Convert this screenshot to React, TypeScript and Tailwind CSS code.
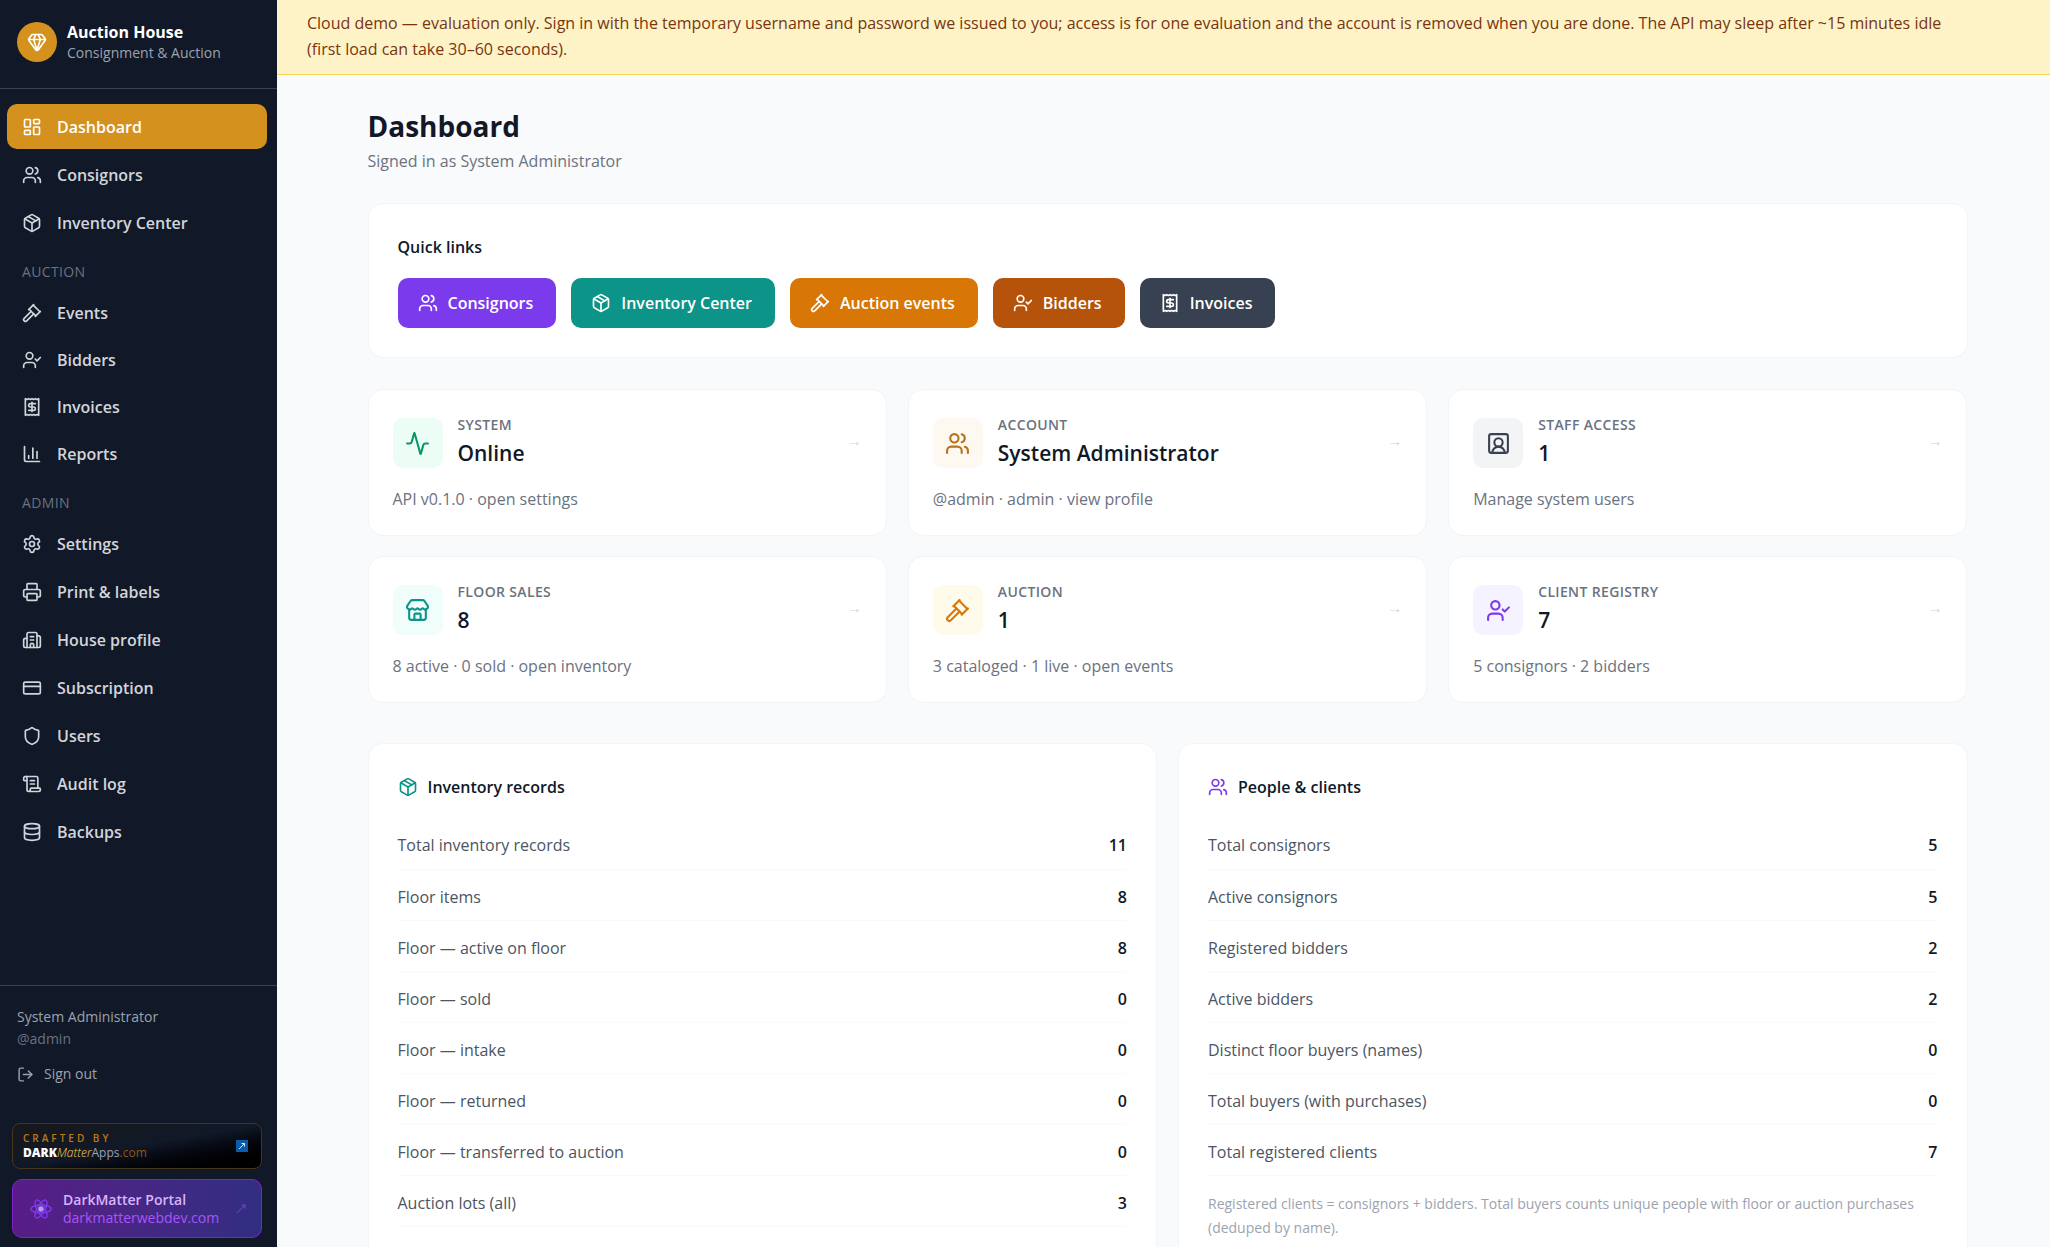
import type { ReactNode } from "react";
import {
  Activity,
  Building2,
  ChartColumn,
  CreditCard,
  Database,
  Gavel,
  Gem,
  LayoutDashboard,
  LogOut,
  Package,
  Printer,
  Receipt,
  ScrollText,
  Settings,
  Shield,
  SquareUserRound,
  Store,
  UserCheck,
  Users,
  type LucideIcon,
} from "lucide-react";

interface NavItem {
  label: string;
  icon: LucideIcon;
}

const mainNav: NavItem[] = [
  { label: "Dashboard", icon: LayoutDashboard },
  { label: "Consignors", icon: Users },
  { label: "Inventory Center", icon: Package },
];

const auctionNav: NavItem[] = [
  { label: "Events", icon: Gavel },
  { label: "Bidders", icon: UserCheck },
  { label: "Invoices", icon: Receipt },
  { label: "Reports", icon: ChartColumn },
];

const adminNav: NavItem[] = [
  { label: "Settings", icon: Settings },
  { label: "Print & labels", icon: Printer },
  { label: "House profile", icon: Building2 },
  { label: "Subscription", icon: CreditCard },
  { label: "Users", icon: Shield },
  { label: "Audit log", icon: ScrollText },
  { label: "Backups", icon: Database },
];

const quickLinks = [
  { label: "Consignors", icon: Users, color: "bg-[#7c3aed]" },
  { label: "Inventory Center", icon: Package, color: "bg-[#0d9488]" },
  { label: "Auction events", icon: Gavel, color: "bg-[#d97706]" },
  { label: "Bidders", icon: UserCheck, color: "bg-[#b45309]" },
  { label: "Invoices", icon: Receipt, color: "bg-[#374151]" },
];

const stats = [
  { label: "System", value: "Online", hint: "API v0.1.0 · open settings", icon: Activity, tone: "bg-[#ecfdf5] text-[#059669]" },
  { label: "Account", value: "System Administrator", hint: "@admin · admin · view profile", icon: Users, tone: "bg-[#fdf8f0] text-[#b8731a]" },
  { label: "Staff access", value: "1", hint: "Manage system users", icon: SquareUserRound, tone: "bg-[#f3f4f6] text-[#374151]" },
  { label: "Floor sales", value: "8", hint: "8 active · 0 sold · open inventory", icon: Store, tone: "bg-[#f0fdfa] text-[#0d9488]" },
  { label: "Auction", value: "1", hint: "3 cataloged · 1 live · open events", icon: Gavel, tone: "bg-[#fffbeb] text-[#d97706]" },
  { label: "Client registry", value: "7", hint: "5 consignors · 2 bidders", icon: UserCheck, tone: "bg-[#f5f3ff] text-[#7c3aed]" },
];

const inventoryRows: [string, number][] = [
  ["Total inventory records", 11],
  ["Floor items", 8],
  ["Floor — active on floor", 8],
  ["Floor — sold", 0],
  ["Floor — intake", 0],
  ["Floor — returned", 0],
  ["Floor — transferred to auction", 0],
  ["Auction lots (all)", 3],
  ["Auction — cataloged", 3],
];

const peopleRows: [string, number][] = [
  ["Total consignors", 5],
  ["Active consignors", 5],
  ["Registered bidders", 2],
  ["Active bidders", 2],
  ["Distinct floor buyers (names)", 0],
  ["Total buyers (with purchases)", 0],
  ["Total registered clients", 7],
];

export default function App() {
  return (
    <div className="flex h-screen overflow-hidden bg-[#f9fafb] font-['Open_Sans','Noto_Sans',sans-serif] text-[16px] leading-6 text-[#111827]">
      <Sidebar />
      <div className="flex min-w-0 flex-1 flex-col">
        <div className="shrink-0 border-b border-[#fcd34d] bg-[#fef3c7] pt-[10px] pr-20 pb-3 pl-[30px] leading-[26px] text-[#78350f]">
          Cloud demo — evaluation only. Sign in with the temporary username and password we issued to you; access is
          for one evaluation and the account is removed when you are done. The API may sleep after ~15 minutes idle
          (first load can take 30–60 seconds).
        </div>
        <main className="min-h-0 flex-1 overflow-y-auto pt-[30px] pr-[30px] pl-[38px] [scrollbar-width:none]">
          <div className="mx-auto max-w-[1600px]">
            <h1 className="text-[28px] leading-[42px] font-bold">Dashboard</h1>
            <p className="mt-[2px] text-[#6b7280]">Signed in as System Administrator</p>

            <section className="mt-[30px] rounded-[15px] border border-[#f3f4f6] bg-white p-[29px]">
              <h2 className="leading-7 font-semibold">Quick links</h2>
              <div className="mt-[17px] flex flex-wrap gap-[15px]">
                {quickLinks.map(({ label, icon: Icon, color }) => (
                  <a
                    key={label}
                    href="#"
                    className={`flex h-[50px] items-center gap-[10px] rounded-[10px] pr-[23px] pl-5 font-semibold text-white ${color}`}
                  >
                    <Icon size={20} />
                    {label}
                  </a>
                ))}
              </div>
            </section>

            <div className="mt-[31px] grid grid-cols-3 gap-x-[21px] gap-y-5">
              {stats.map((s) => (
                <a key={s.label} href="#" className="rounded-[15px] border border-[#f3f4f6] bg-white px-6 pt-[25px] pb-6">
                  <div className="flex items-center">
                    <span className={`flex size-[50px] items-center justify-center rounded-[10px] ${s.tone}`}>
                      <s.icon size={25} />
                    </span>
                    <div className="ml-[15px] flex-1">
                      <p className="text-[14px] leading-5 font-semibold tracking-wide text-[#6b7280] uppercase">{s.label}</p>
                      <p className="text-[21px] leading-9 font-semibold">{s.value}</p>
                    </div>
                    <span className="pb-1 font-['Liberation_Sans',sans-serif] text-[15px] text-[#d1d5db]">→</span>
                  </div>
                  <p className="mt-4 text-[#6b7280]">{s.hint}</p>
                </a>
              ))}
            </div>

            <div className="mt-10 grid grid-cols-2 items-start gap-[21px]">
              <RecordCard title="Inventory records" icon={<Package size={20} className="text-[#0d9488]" />} rows={inventoryRows} />
              <RecordCard title="People & clients" icon={<Users size={20} className="text-[#7c3aed]" />} rows={peopleRows}>
                <p className="mt-4 text-[14px] text-[#9ca3af]">
                  Registered clients = consignors + bidders. Total buyers counts unique people with floor or auction
                  purchases (deduped by name).
                </p>
              </RecordCard>
            </div>
          </div>
        </main>
      </div>
    </div>
  );
}

interface RecordCardProps {
  title: string;
  icon: ReactNode;
  rows: [string, number][];
  children?: ReactNode;
}

function RecordCard({ title, icon, rows, children }: RecordCardProps) {
  return (
    <section className="rounded-[15px] border border-[#f3f4f6] bg-white p-[29px]">
      <h2 className="mb-[17px] flex items-center gap-[10px] leading-7 font-semibold">
        {icon}
        {title}
      </h2>
      <table className="w-full">
        <tbody>
          {rows.map(([label, value]) => (
            <tr key={label} className="h-[51px] border-b border-[#f9fafb]">
              <th scope="row" className="pt-1 text-left font-normal text-[#4b5563]">
                {label}
              </th>
              <td className="pt-1 text-right font-semibold">{value}</td>
            </tr>
          ))}
        </tbody>
      </table>
      {children}
    </section>
  );
}

function Sidebar() {
  return (
    <aside className="flex w-[277px] shrink-0 flex-col bg-[#111827]">
      <div className="flex h-[89px] shrink-0 items-center gap-[10px] border-b border-[#374151] pb-1 pl-[17px]">
        <span className="flex size-10 items-center justify-center rounded-full bg-[#d4911e] text-white">
          <Gem size={20} />
        </span>
        <div>
          <p className="leading-[22px] font-bold text-white">Auction House</p>
          <p className="text-[14px] leading-5 text-[#9ca3af]">Consignment &amp; Auction</p>
        </div>
      </div>

      <nav className="min-h-0 flex-1 overflow-hidden pt-[15px] pr-[10px] pl-[7px]">
        <NavGroup items={mainNav} active="Dashboard" />
        <NavGroup title="Auction" items={auctionNav} tight />
        <NavGroup title="Admin" items={adminNav} />
      </nav>

      <div className="border-t border-[#374151] px-[17px] pt-5 text-[14px] leading-[22px] text-[#9ca3af]">
        <p>System Administrator</p>
        <p className="text-[#6b7280]">@admin</p>
        <button type="button" className="mt-[13px] flex items-center gap-[10px]">
          <LogOut size={17} />
          Sign out
        </button>
      </div>

      <div className="flex flex-col gap-[10px] pt-[38px] pr-[15px] pb-[9px] pl-3">
        <a
          href="#"
          className="flex h-[46px] items-center justify-between rounded-lg border border-[#44351b] bg-linear-to-br from-[#18181b] via-[#111827] to-black pr-[13px] pl-[10px]"
        >
          <span>
            <span className="block text-[10px] leading-[13px] font-semibold tracking-[3px] text-[#b8791a] uppercase">
              Crafted by
            </span>
            <span className="block text-[12px] leading-4 text-[#9ca3af]">
              <b className="font-extrabold text-white">DARK</b>
              <i className="font-light text-[#fcd34d]">Matter</i>
              <span className="font-medium">Apps</span>
              <span className="text-[#92560f]">.com</span>
            </span>
          </span>
          <svg viewBox="0 0 12 12" className="size-3 bg-[#0a5ca8]" fill="none" stroke="#dbeafe">
            <path d="M3 9 8.5 3.5M5.500 3.500h3v3" />
          </svg>
        </a>
        <a
          href="#"
          className="flex h-[59px] items-center rounded-[10px] border border-[#7e22ce] bg-linear-to-r from-[#581c87] to-[#312e81] pr-[15px] pl-[17px] text-[14px] leading-[18px]"
        >
          <svg viewBox="-12 -12 24 24" className="size-[22px]" fill="none" stroke="#7c3aed" strokeWidth="1.5">
            <ellipse rx="11" ry="4.300" />
            <ellipse rx="11" ry="4.300" transform="rotate(60)" />
            <ellipse rx="11" ry="4.300" transform="rotate(120)" />
            <circle r="3" fill="#b79af5" stroke="none" />
          </svg>
          <span className="ml-[11px] flex-1">
            <span className="block font-semibold text-[#d8b4fe]">DarkMatter Portal</span>
            <span className="block text-[#a855f7]">darkmatterwebdev.com</span>
          </span>
          <svg viewBox="0 0 10 10" className="size-[10px]" fill="none" stroke="#9333ea">
            <path d="M1 9 9 1M5.500 1H9v3.500" />
          </svg>
        </a>
      </div>
    </aside>
  );
}

interface NavGroupProps {
  title?: string;
  items: NavItem[];
  active?: string;
  tight?: boolean;
}

function NavGroup({ title, items, active, tight }: NavGroupProps) {
  return (
    <>
      {title && (
        <p className="pt-[17px] pb-2 pl-[15px] text-[14px] leading-5 tracking-wide text-[#6b7280] uppercase">{title}</p>
      )}
      <ul className={`flex flex-col font-semibold text-[#d1d5db] ${tight ? "gap-[2px]" : "gap-[3px]"}`}>
        {items.map(({ label, icon: Icon }) => (
          <li key={label}>
            <a
              href="#"
              className={`flex h-[45px] items-center gap-[15px] rounded-[10px] pl-[15px] ${
                label === active ? "bg-[#d4911e] text-white" : ""
              }`}
            >
              <Icon size={20} />
              {label}
            </a>
          </li>
        ))}
      </ul>
    </>
  );
}
